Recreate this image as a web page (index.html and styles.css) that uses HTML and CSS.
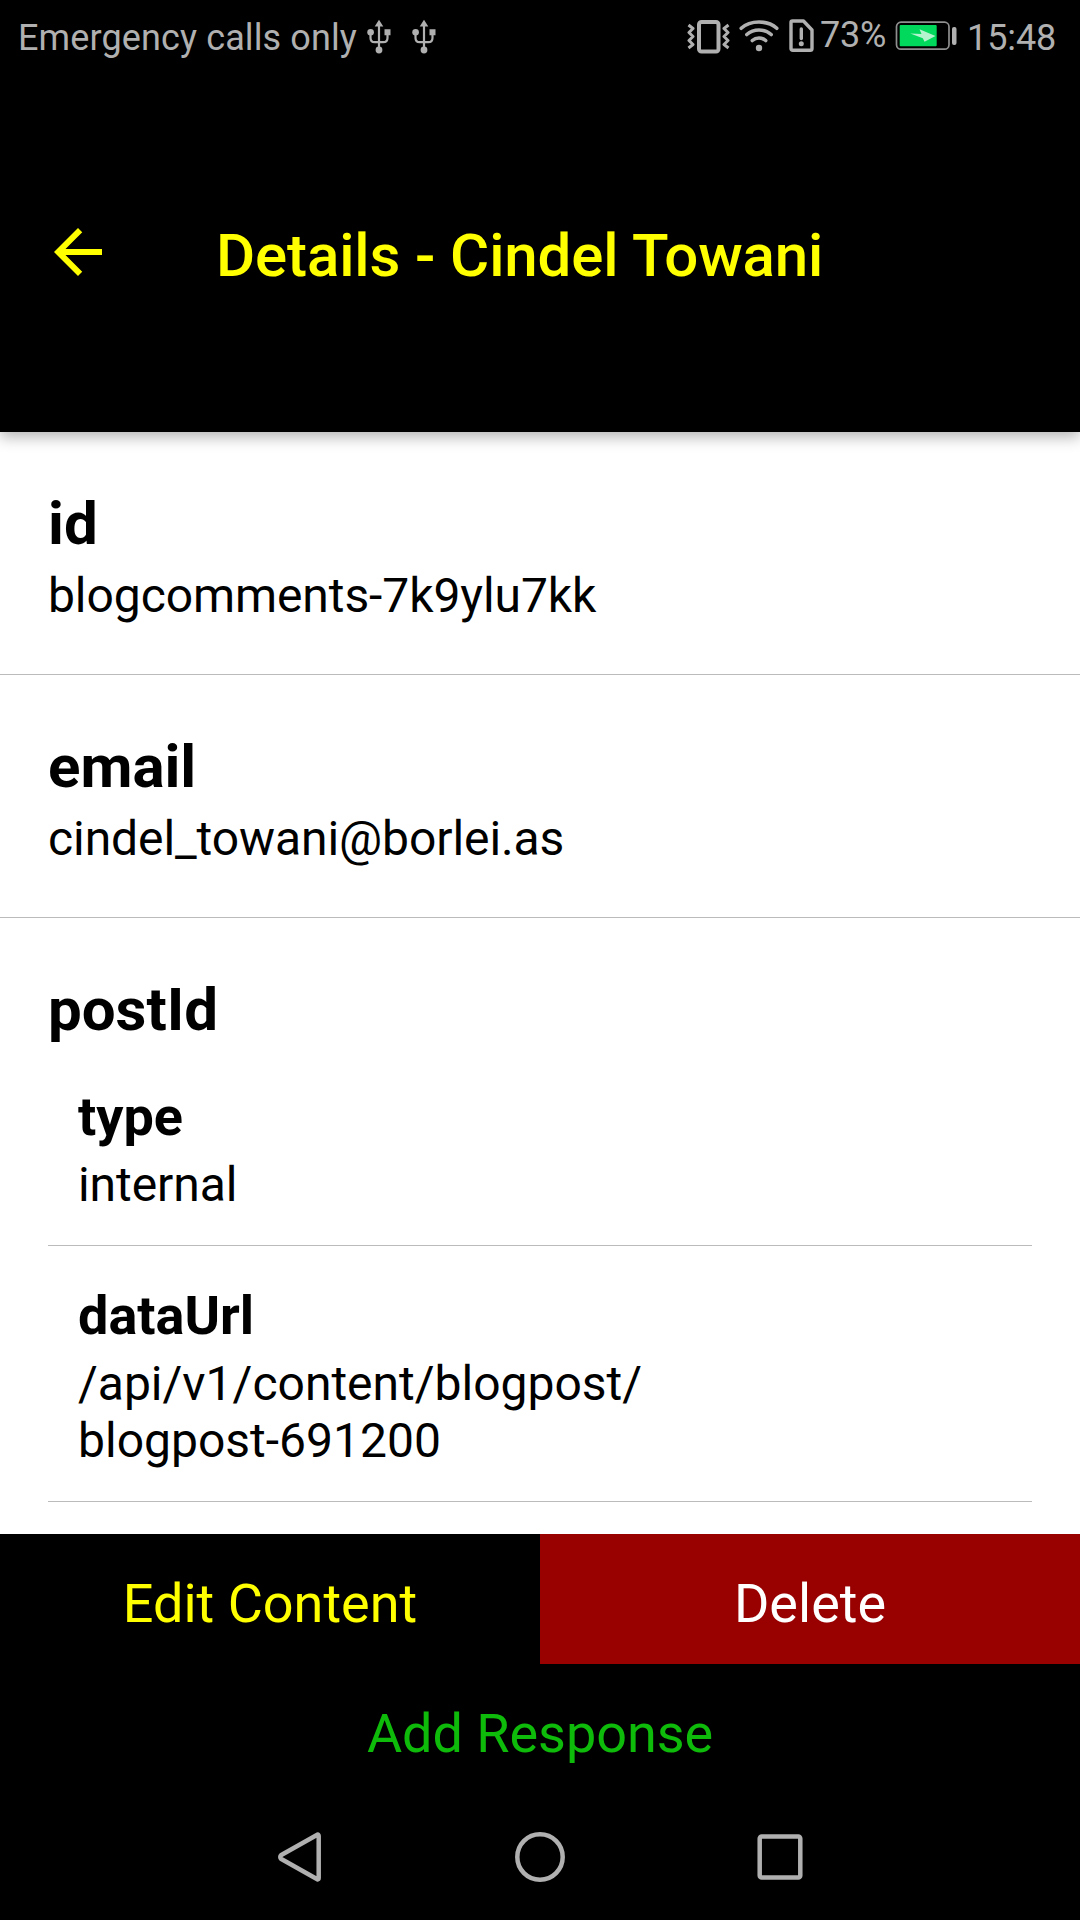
FILE: index.html
```html
<!DOCTYPE html>
<html lang="en">
<head>
<meta charset="utf-8">
<title>Details - Cindel Towani</title>
<link rel="stylesheet" href="styles.css">
</head>
<body>
<div class="screen">
  <header class="header">
    <div class="status">
      <span class="carrier">Emergency calls only</span>
      <svg class="usb" viewBox="0 0 24 36"><use href="#usb-shape"/></svg>
      <svg class="usb usb-second" viewBox="0 0 24 36">
        <g id="usb-shape">
          <path d="M12 6V31M3.500 13v6q0 4.200 4.200 4.200h8.600q4.200 0 4.200-4.200v-6" fill="none" stroke="#b0b0b0" stroke-width="2.200"/>
          <path d="M12 .8L16.300 7.500H7.700zM17.500 10.200h6v6h-6z" fill="#b0b0b0"/>
          <circle cx="3.600" cy="13.200" r="3.300" fill="#b0b0b0"/>
          <circle cx="12" cy="31" r="3.400" fill="#b0b0b0"/>
        </g>
      </svg>
      <svg class="vibrate" viewBox="0 0 44 34" fill="none" stroke="#b0b0b0" stroke-linejoin="round">
        <rect x="12" y="2" width="19.500" height="29.500" rx="2.500" stroke-width="4"/>
        <path d="M1.500 5l4.500 3.500-4 4 4 4-4 4 4 4-4.500 3.500M41.500 5L37 8.500l4 4-4 4 4 4-4 4 4.500 3.500" stroke-width="3"/>
      </svg>
      <svg class="wifi" viewBox="0 0 40 32" fill="none" stroke="#b0b0b0" stroke-width="3.600" stroke-linecap="round">
        <path d="M2.200 8.300Q9 2 20 2t17.800 6.300M7.800 14.500Q13 10 20 10t12.200 4.500M13.300 20.500q2.800-2.500 6.700-2.500t6.700 2.500"/>
        <circle cx="20" cy="28" r="3.200" fill="#b0b0b0" stroke="none"/>
      </svg>
      <svg class="sim" viewBox="0 0 25 34" fill="none" stroke="#b0b0b0" stroke-width="3.400" stroke-linejoin="round">
        <path d="M3.500 2H14.500L23 11V29.500Q23 31.300 21.200 31.300H3.800Q2 31.300 2 29.500V3.500Q2 2 3.500 2z"/>
        <path d="M12.300 10v9.500" stroke-linecap="round"/>
        <circle cx="12.300" cy="24.800" r="2.500" fill="#b0b0b0" stroke="none"/>
      </svg>
      <span class="percent">73%</span>
      <svg class="battery" viewBox="0 0 62 30">
        <rect x="1.500" y="1.200" width="52.500" height="27" rx="4.500" fill="none" stroke="#8f8f8f" stroke-width="1.700"/>
        <rect x="4.700" y="4" width="37" height="21.300" rx="1" fill="#00d95b"/>
        <path d="M15.300 12.600L26.500 12.900 24.500 8.300 40.500 15 29.500 20.700 27.800 17.300z" fill="#b3f3cd"/>
        <rect x="57" y="6" width="4.500" height="18" rx="2" fill="#b0b0b0"/>
      </svg>
      <span class="clock">15:48</span>
    </div>
    <div class="toolbar">
      <svg class="back" viewBox="0 0 24 24" fill="#ff0"><path d="M20 11H7.830l5.590-5.590L12 4l-8 8 8 8 1.410-1.410L7.830 13H20v-2z"/></svg>
      <h1 class="title">Details - Cindel Towani</h1>
    </div>
  </header>

  <main class="content">
    <section class="item">
      <h2 class="label">id</h2>
      <p class="value">blogcomments-7k9ylu7kk</p>
    </section>
    <section class="item">
      <h2 class="label">email</h2>
      <p class="value">cindel_towani@borlei.as</p>
    </section>
    <section class="item group">
      <h2 class="label">postId</h2>
      <div class="subitem">
        <h3 class="sublabel">type</h3>
        <p class="value">internal</p>
      </div>
      <div class="subitem">
        <h3 class="sublabel">dataUrl</h3>
        <p class="value path">/api/v1/content/blogpost/<br>blogpost-691200</p>
      </div>
    </section>
  </main>

  <footer class="actions">
    <div class="action edit">Edit Content</div>
    <div class="action delete">Delete</div>
    <div class="action respond">Add Response</div>
  </footer>

  <nav class="navbar">
    <svg viewBox="0 0 50 50"><path d="M42.300 2.700Q43.700 2.200 43.700 4V46Q43.700 47.800 42.300 47.300L6.300 27Q4.200 25 6.300 23z"/></svg>
    <svg viewBox="0 0 50 50"><circle cx="25" cy="25" r="22.700"/></svg>
    <svg viewBox="0 0 50 50"><rect x="4.700" y="4.500" width="40.600" height="41" rx="2"/></svg>
  </nav>
</div>
</body>
</html>
```
FILE: styles.css
```css
* { box-sizing: border-box; margin: 0; padding: 0; }

body {
  width: 1080px;
  height: 1920px;
  overflow: hidden;
  background: #000;
  font-family: Roboto, sans-serif;
  color: #000;
}

.screen {
  display: flex;
  flex-direction: column;
  height: 1920px;
}

.header {
  position: relative;
  flex: 0 0 432px;
  background: #000;
  box-shadow: 0 5px 14px rgba(0, 0, 0, 0.3);
}

.status {
  display: flex;
  align-items: flex-start;
  height: 72px;
  padding: 0 24px 0 18px;
  color: #b0b0b0;
  font-size: 36px;
  line-height: 42px;
  white-space: nowrap;
}

.status svg { flex: none; display: block; }
.carrier { flex: 0 0 349px; margin-top: 17px; letter-spacing: 0.12px; }
.usb { width: 24px; height: 36px; margin-top: 19px; }
.usb-second { margin-left: 21px; }
.vibrate { width: 44px; height: 34px; margin: 20px 0 0 251px; }
.wifi { width: 40px; height: 32px; margin: 20px 0 0 8px; }
.sim { width: 25px; height: 34px; margin: 19px 0 0 10px; }
.percent { flex: 0 0 76px; padding-left: 6px; margin-top: 14px; letter-spacing: -0.2px; }
.battery { width: 62px; height: 30px; margin: 21px 0 0 5px; }
.clock { margin: 17px 0 0 10px; letter-spacing: -0.1px; }

.toolbar {
  display: flex;
  align-items: center;
  height: 360px;
  padding-left: 42px;
}

.back { width: 72px; height: 72px; }

.title {
  margin: 8px 0 0 102px;
  color: #ff0;
  font-size: 60px;
  font-weight: 500;
  line-height: 70px;
  letter-spacing: -0.12px;
}

.content {
  flex: 0 0 1102px;
  overflow: hidden;
  background: #fff;
}

.item {
  height: 243px;
  padding: 57px 48px 0;
  border-bottom: 1px solid #bbb;
}

.group { height: auto; border-bottom: 0; }

.label {
  height: 78px;
  font-size: 60px;
  font-weight: 700;
  line-height: 70px;
}

.group .label { height: 72px; }

.value { font-size: 48px; line-height: 57px; letter-spacing: -0.08px; }
.path { letter-spacing: 0; }

.subitem {
  padding: 38px 30px 32px;
  border-bottom: 1px solid #bbb;
}

.sublabel {
  height: 71px;
  font-size: 54px;
  font-weight: 700;
  line-height: 64px;
}

.actions {
  display: grid;
  grid-template-columns: 1fr 1fr;
  grid-auto-rows: 130px;
}

.action {
  padding-top: 38px;
  font-size: 54px;
  line-height: 64px;
  text-align: center;
}

.edit { color: #ff0; }
.delete { background: #900; color: #fff; }
.respond { grid-column: 1 / -1; color: #0fbb0a; letter-spacing: -0.05px; }

.navbar {
  display: flex;
  justify-content: center;
  gap: 190px;
  padding-top: 38px;
}

.navbar svg {
  width: 50px;
  height: 50px;
  fill: none;
  stroke: #b0b0b0;
  stroke-width: 4.500;
  stroke-linejoin: round;
}
```
